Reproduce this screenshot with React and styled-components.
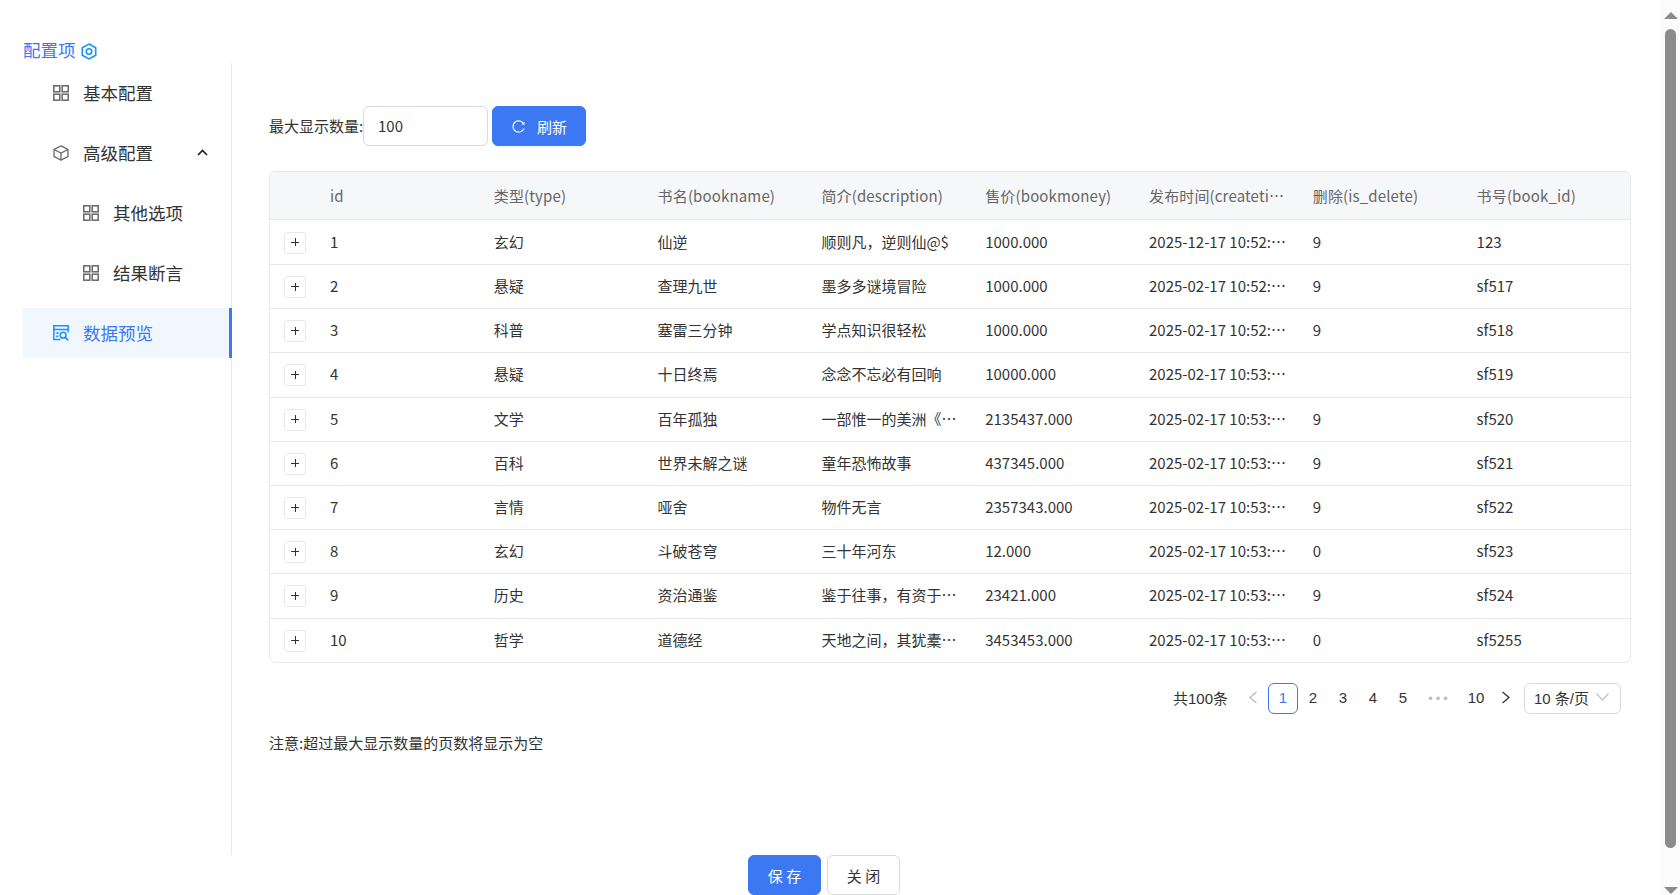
import React from 'react'
import styled, { createGlobalStyle } from 'styled-components'
import { AiOutlineReload } from 'react-icons/ai'

const rows = [
    ['1', '玄幻', '仙逆', '顺则凡，逆则仙@$', '1000.000', '2025-12-17 10:52:10', '9', '123'],
    ['2', '悬疑', '查理九世', '墨多多谜境冒险', '1000.000', '2025-02-17 10:52:10', '9', 'sf517'],
    ['3', '科普', '塞雷三分钟', '学点知识很轻松', '1000.000', '2025-02-17 10:52:10', '9', 'sf518'],
    ['4', '悬疑', '十日终焉', '念念不忘必有回响', '10000.000', '2025-02-17 10:53:10', '', 'sf519'],
    ['5', '文学', '百年孤独', '一部惟一的美洲《圣经》', '2135437.000', '2025-02-17 10:53:10', '9', 'sf520'],
    ['6', '百科', '世界未解之谜', '童年恐怖故事', '437345.000', '2025-02-17 10:53:10', '9', 'sf521'],
    ['7', '言情', '哑舍', '物件无言', '2357343.000', '2025-02-17 10:53:10', '9', 'sf522'],
    ['8', '玄幻', '斗破苍穹', '三十年河东', '12.000', '2025-02-17 10:53:10', '0', 'sf523'],
    ['9', '历史', '资治通鉴', '鉴于往事，有资于治道', '23421.000', '2025-02-17 10:53:10', '9', 'sf524'],
    ['10', '哲学', '道德经', '天地之间，其犹橐籥乎', '3453453.000', '2025-02-17 10:53:10', '0', 'sf5255'],
]

const columns = ['id', '类型(type)', '书名(bookname)', '简介(description)', '售价(bookmoney)', '发布时间(createtime)', '删除(is_delete)', '书号(book_id)']

const GridIcon = () => (
    <svg width="16" height="16" viewBox="0 0 16 16" fill="none" stroke="currentColor" strokeWidth="1.5">
        <rect x="0.8" y="0.8" width="6" height="6" />
        <rect x="9.2" y="0.8" width="6" height="6" />
        <rect x="0.8" y="9.2" width="6" height="6" />
        <rect x="9.2" y="9.2" width="6" height="6" />
    </svg>
)

const CubeIcon = () => (
    <svg width="16" height="16" viewBox="0 0 15 15" fill="none" stroke="currentColor" strokeWidth="1.2">
        <path d="M7.5 0.8 L14 4.2 V10.8 L7.5 14.2 L1 10.8 V4.2 Z" />
        <path d="M1 4.2 L7.5 7.6 L14 4.2 M7.5 7.6 V14.2" />
    </svg>
)

const PreviewIcon = () => (
    <svg width="16" height="16" viewBox="0 0 15 15" fill="none" stroke="currentColor" strokeWidth="1.4">
        <path d="M7 13.6 H0.8 V0.8 H14.2 V7" />
        <path d="M0.8 4.3 H14.2 M3 7.5 H5.5 M3 10.5 H5" />
        <circle cx="9.5" cy="9.6" r="2.7" />
        <path d="M11.5 11.6 L14.4 14.4" />
    </svg>
)

const HexIcon = () => (
    <svg width="16" height="17" viewBox="0 0 15 16" fill="none" stroke="#1890ff" strokeWidth="1.5">
        <path d="M7.5 1 L13.8 4.5 V11.5 L7.5 15 L1.2 11.5 V4.5 Z" />
        <circle cx="7.5" cy="8" r="2.6" />
    </svg>
)

const ChevronUp = () => (
    <svg width="11" height="7" viewBox="0 0 11 7" fill="none" stroke="#222" strokeWidth="1.7">
        <path d="M1 6 L5.5 1.5 L10 6" />
    </svg>
)

const Arrow = ({ dir }) => (
    <svg width="12" height="13" viewBox="0 0 12 13" fill="none" stroke="currentColor" strokeWidth="1.3">
        <path d={dir === 'left' ? 'M9.5 1 L3 6.5 L9.5 12' : 'M2.5 1 L9 6.5 L2.5 12'} />
    </svg>
)

const App = () => {
    return (
        <Page>
            <GlobalStyle />
            <Title>配置项<HexIcon /></Title>
            <Body>
                <Sidebar>
                    <MenuItem><GridIcon /><span>基本配置</span></MenuItem>
                    <MenuItem>
                        <CubeIcon /><span>高级配置</span>
                        <Caret><ChevronUp /></Caret>
                    </MenuItem>
                    <MenuItem $sub><GridIcon /><span>其他选项</span></MenuItem>
                    <MenuItem $sub><GridIcon /><span>结果断言</span></MenuItem>
                    <MenuItem $active><PreviewIcon /><span>数据预览</span></MenuItem>
                </Sidebar>
                <Content>
                    <Toolbar>
                        <label>最大显示数量:</label>
                        <Input defaultValue="100" />
                        <Button $primary $wide><AiOutlineReload size={15} />刷新</Button>
                    </Toolbar>
                    <Table>
                        <HeadRow>
                            <Cell />
                            {columns.map(c => <Cell key={c}>{c}</Cell>)}
                        </HeadRow>
                        {rows.map(row => (
                            <Row key={row[0]}>
                                <ExpandCell><Expand /></ExpandCell>
                                {row.map((v, i) => <BodyCell key={i}>{v}</BodyCell>)}
                            </Row>
                        ))}
                    </Table>
                    <Pager>
                        <Total>共100条</Total>
                        <PageItem $muted><Arrow dir="left" /></PageItem>
                        <PageItem $active>1</PageItem>
                        <PageItem>2</PageItem>
                        <PageItem>3</PageItem>
                        <PageItem>4</PageItem>
                        <PageItem>5</PageItem>
                        <Dots>•••</Dots>
                        <PageItem>10</PageItem>
                        <PageItem><Arrow dir="right" /></PageItem>
                        <SizeSelect>
                            10 条/页
                            <svg width="13" height="8" viewBox="0 0 13 8" fill="none" stroke="#c4c4c4" strokeWidth="1.2">
                                <path d="M0.5 0.5 L6.5 7 L12.5 0.5" />
                            </svg>
                        </SizeSelect>
                    </Pager>
                    <Note>注意:超过最大显示数量的页数将显示为空</Note>
                </Content>
            </Body>
            <Footer>
                <Button $primary>保 存</Button>
                <Button>关 闭</Button>
            </Footer>
            <ScrollTrack>
                <ScrollArrow />
                <ScrollThumb />
                <ScrollArrow $down />
            </ScrollTrack>
        </Page>
    )
}

export default App

const GlobalStyle = createGlobalStyle`
    html, body {
        margin: 0;
        padding: 0;
        overflow: hidden;
    }
    * {
        box-sizing: border-box;
    }
`

const Page = styled.div`
    height: 100vh;
    overflow: hidden;
    background: #fff;
    color: #333;
    font-family: "Noto Sans CJK SC", "Noto Sans", sans-serif;
    font-size: 15px;
`

const ScrollTrack = styled.div`
    position: fixed;
    top: 0;
    right: 0;
    bottom: 0;
    width: 19px;
    display: flex;
    flex-direction: column;
    align-items: center;
    background: #fbfbfb;
    padding: 12px 0 1px;
`

const ScrollThumb = styled.div`
    width: 11px;
    height: 819px;
    margin: 10px 0 39px;
    background: #8b8b8b;
    border-radius: 6px;
`

const ScrollArrow = styled.div`
    width: 0;
    height: 0;
    border-left: 7px solid transparent;
    border-right: 7px solid transparent;
    border-bottom: ${props => props.$down ? '0' : '7px solid #8b8b8b'};
    border-top: ${props => props.$down ? '7px solid #8b8b8b' : '0'};
`

const Title = styled.div`
    display: flex;
    align-items: center;
    gap: 5px;
    padding: 35px 0 0 23px;
    height: 63px;
    line-height: 25px;
    font-size: 17.5px;
    color: #3b78f2;
    svg {
        margin-top: 5px;
    }
`

const Body = styled.div`
    display: flex;
    height: 792px;
`

const Sidebar = styled.div`
    width: 209px;
    margin-left: 23px;
    padding-top: 5px;
    border-right: 1px solid #e8e8e8;
    flex-shrink: 0;
`

const MenuItem = styled.div`
    display: flex;
    align-items: center;
    gap: 14px;
    height: 50px;
    margin-bottom: 10px;
    padding-left: ${props => props.$sub ? '60px' : '30px'};
    font-size: 17.5px;
    color: ${props => props.$active ? '#3b78f2' : '#333'};
    background: ${props => props.$active ? '#f0f7ff' : 'transparent'};
    border-right: ${props => props.$active ? '3px solid #3b78f2' : 'none'};
    margin-right: ${props => props.$active ? '-1px' : '0'};

    span {
        position: relative;
        top: -1px;
    }
    svg {
        color: ${props => props.$active ? '#1890ff' : '#666'};
        flex-shrink: 0;
    }
`

const Caret = styled.span`
    display: flex;
    margin-left: 30px;
`

const Content = styled.div`
    flex: 1;
    min-width: 0;
    padding: 42px 49px 0 37px;
`

const Toolbar = styled.div`
    display: flex;
    align-items: center;
    height: 41px;
    label {
        width: 94px;
        white-space: nowrap;
    }
`

const Input = styled.input`
    width: 125px;
    height: 40px;
    margin-right: 4px;
    padding: 0 14px;
    border: 1px solid #d9d9d9;
    border-radius: 6px;
    outline: none;
    font: inherit;
    color: #333;
`

const Button = styled.button`
    display: inline-flex;
    align-items: center;
    justify-content: center;
    gap: 11px;
    width: ${props => props.$wide ? '94px' : '73px'};
    height: 40px;
    padding: 0;
    margin-top: ${props => props.$wide ? '1px' : '0'};
    border: 1px solid ${props => props.$primary ? '#3b78f2' : '#d9d9d9'};
    border-radius: 6px;
    background: ${props => props.$primary ? '#3b78f2' : '#fff'};
    color: ${props => props.$primary ? '#fff' : '#333'};
    box-shadow: ${props => props.$primary ? '0 2px 0 rgba(5, 95, 255, 0.06)' : 'none'};
    font: inherit;
    white-space: pre;
`

const Table = styled.div`
    margin-top: 25px;
    border: 1px solid #e8e8e8;
    border-radius: 6px;
    overflow: hidden;
`

const Row = styled.div`
    display: grid;
    grid-template-columns: 52px repeat(7, 163.8px) 1fr;
    align-items: center;
    height: 44.2px;
    border-bottom: 1px solid #e8e8e8;
    &:nth-child(2) {
        height: 45px;
    }
    &:last-child {
        height: 43.4px;
        border-bottom: none;
    }
`

const HeadRow = styled(Row)`
    height: 48px;
    background: #f6f7f9;
    color: #666;
    letter-spacing: 0.15px;
`

const Cell = styled.div`
    padding: 0 18px 0 8px;
    min-width: 0;
    overflow: hidden;
    white-space: nowrap;
    text-overflow: ellipsis;
`

const BodyCell = styled(Cell)`
    padding-bottom: 2px;
`

const ExpandCell = styled.div`
    padding: 1px 0 0 14px;
    display: flex;
`

const Expand = styled.span`
    position: relative;
    display: block;
    flex-shrink: 0;
    width: 22px;
    height: 22px;
    border: 1px solid #e8e8e8;
    border-radius: 3px;

    &::before, &::after {
        content: '';
        position: absolute;
        background: #333;
    }
    &::before {
        left: 6px;
        top: 9px;
        width: 8px;
        height: 1px;
    }
    &::after {
        left: 9.5px;
        top: 5.5px;
        width: 1px;
        height: 8px;
    }
`

const Pager = styled.div`
    display: flex;
    justify-content: flex-end;
    align-items: center;
    margin-top: 20px;
    padding-right: 10px;
    font-family: "Liberation Sans", "Noto Sans CJK SC", sans-serif;
`

const Total = styled.span`
    margin-right: 10px;
    padding-bottom: 2px;
`

const PageItem = styled.span`
    display: flex;
    align-items: center;
    justify-content: center;
    width: 30px;
    height: 31px;
    padding-bottom: 2px;
    border: ${props => props.$active ? '1px solid #3b78f2' : 'none'};
    border-radius: 6px;
    color: ${props => props.$active ? '#3b78f2' : props.$muted ? '#bbb' : '#333'};
`

const Dots = styled.span`
    width: 43px;
    text-align: center;
    font-size: 13px;
    letter-spacing: 3px;
    color: #bbb;
`

const SizeSelect = styled.div`
    display: flex;
    align-items: center;
    justify-content: space-between;
    width: 97px;
    height: 31px;
    margin-left: 3px;
    padding: 0 11px 2px 9px;
    border: 1px solid #d9d9d9;
    border-radius: 6px;
`

const Note = styled.div`
    margin-top: 18px;
    line-height: 22px;
`

const Footer = styled.div`
    display: flex;
    justify-content: center;
    gap: 6px;
    padding: 0 32px 20px 0;
`
